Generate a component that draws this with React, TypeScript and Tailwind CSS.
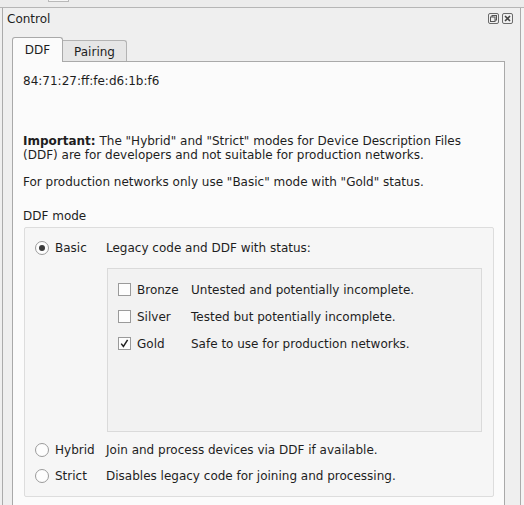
import React from "react";

const font = { fontFamily: '"DejaVu Sans", "Liberation Sans", sans-serif' };

function Radio({ checked }: { checked?: boolean }) {
  return (
    <div className="w-[14px] h-[14px] rounded-full border border-[#9b9b9b] bg-[#fdfdfd] flex items-center justify-center shrink-0">
      {checked && <div className="w-[6px] h-[6px] rounded-full bg-[#3a3a3a]" />}
    </div>
  );
}

function Check({ checked }: { checked?: boolean }) {
  return (
    <div className="w-[13px] h-[13px] border border-[#9a9a9a] bg-[#fdfdfd] flex items-center justify-center shrink-0">
      {checked && (
        <svg width="11" height="11" viewBox="0 0 11 11">
          <path d="M2.2 5.6 L4.4 8.4 L8.6 1.8" fill="none" stroke="#222" strokeWidth="1.5" />
        </svg>
      )}
    </div>
  );
}

function RadioRow({ label, desc, checked }: { label: string; desc: string; checked?: boolean }) {
  return (
    <div className="flex items-center h-[15px]">
      <Radio checked={checked} />
      <span className="ml-[6px] w-[51px] shrink-0">{label}</span>
      <span>{desc}</span>
    </div>
  );
}

function CheckRow({ label, desc, checked }: { label: string; desc: string; checked?: boolean }) {
  return (
    <div className="flex items-center h-[15px]">
      <Check checked={checked} />
      <span className="ml-[6px] w-[54px] shrink-0">{label}</span>
      <span>{desc}</span>
    </div>
  );
}

export default function App() {
  return (
    <div
      className="w-[524px] h-[505px] overflow-hidden bg-[#efefef] text-[12px] leading-[14px] text-[#1e1e1e] flex flex-col"
      style={font}
    >
      {/* top strip */}
      <div className="h-[8px] shrink-0 border-b border-[#b6b6b6] bg-[#ececec]">
        <div className="ml-[48px] w-[21px] h-[2px] border-x border-b border-[#b9b9b9] bg-[#f6f6f6]" />
      </div>
      <div className="flex flex-1 min-h-0">
        <div className="w-[2px] shrink-0" />
        <div className="w-[519px] shrink-0 border-x border-[#ababab] bg-[#efefef] flex flex-col">
          {/* title */}
          <div className="flex items-start h-[29px] shrink-0">
            <span className="ml-[4px] mt-[4px]">Control</span>
            <div className="ml-auto mt-[5px] mr-[7px] flex gap-[3px]">
              <svg width="11" height="11" viewBox="0 0 11 11">
                <rect x="0.5" y="0.5" width="10" height="10" rx="1.5" fill="none" stroke="#6b6b6b" />
                <rect x="4" y="2.5" width="4.5" height="4.5" fill="none" stroke="#555" />
                <rect x="2.5" y="4" width="4.5" height="4.5" fill="#f0f0f0" stroke="#555" />
              </svg>
              <svg width="11" height="11" viewBox="0 0 11 11">
                <rect x="0.5" y="0.5" width="10" height="10" rx="1.5" fill="none" stroke="#6b6b6b" />
                <path d="M3 3 L8 8 M8 3 L3 8" stroke="#444" strokeWidth="1.6" />
              </svg>
            </div>
          </div>
          {/* tabs */}
          <div className="pl-[9px] flex flex-col">
            <div className="flex items-end h-[24px]">
              <div className="w-[51px] h-[25px] mb-[-1px] relative z-10 border border-b-0 border-[#a9a9a9] rounded-t-[3px] bg-[#fbfbfb] flex items-center justify-center">
                <span className="mt-[-1px]">DDF</span>
              </div>
              <div className="w-[64px] h-[21px] border border-l-0 border-b-0 border-[#b3b3b3] rounded-tr-[3px] bg-[#e6e6e6] flex items-center justify-center">
                <span className="pt-[1px]">Pairing</span>
              </div>
            </div>
            <div className="w-[493px] h-[460px] border border-[#a9a9a9] bg-[#fbfbfb] px-[10px] flex flex-col">
              <div className="mt-[12px]">84:71:27:ff:fe:d6:1b:f6</div>
              <div className="mt-[46px]">
                <b>Important:</b> The "Hybrid" and "Strict" modes for Device Description Files
                <br />
                (DDF) are for developers and not suitable for production networks.
              </div>
              <div className="mt-[13px]">For production networks only use "Basic" mode with "Gold" status.</div>
              <div className="mt-[20px]">DDF mode</div>
              <div className="mt-[4px] ml-[1px] w-[470px] border border-[#dddddd] bg-[#f6f6f6] rounded-[2px] pl-[10px] pt-[12px] pb-[13px] flex flex-col">
                <RadioRow checked label="Basic" desc="Legacy code and DDF with status:" />
                <div className="mt-[13px] ml-[72px] w-[375px] h-[164px] border border-[#dadada] bg-[#f2f2f2] pl-[10px] pt-[13px] flex flex-col gap-[12px]">
                  <CheckRow label="Bronze" desc="Untested and potentially incomplete." />
                  <CheckRow label="Silver" desc="Tested but potentially incomplete." />
                  <CheckRow checked label="Gold" desc="Safe to use for production networks." />
                </div>
                <div className="mt-[10px]">
                  <RadioRow label="Hybrid" desc="Join and process devices via DDF if available." />
                </div>
                <div className="mt-[11px]">
                  <RadioRow label="Strict" desc="Disables legacy code for joining and processing." />
                </div>
              </div>
            </div>
          </div>
        </div>
        <div className="flex-1 bg-[#f4f4f4]" />
      </div>
    </div>
  );
}
